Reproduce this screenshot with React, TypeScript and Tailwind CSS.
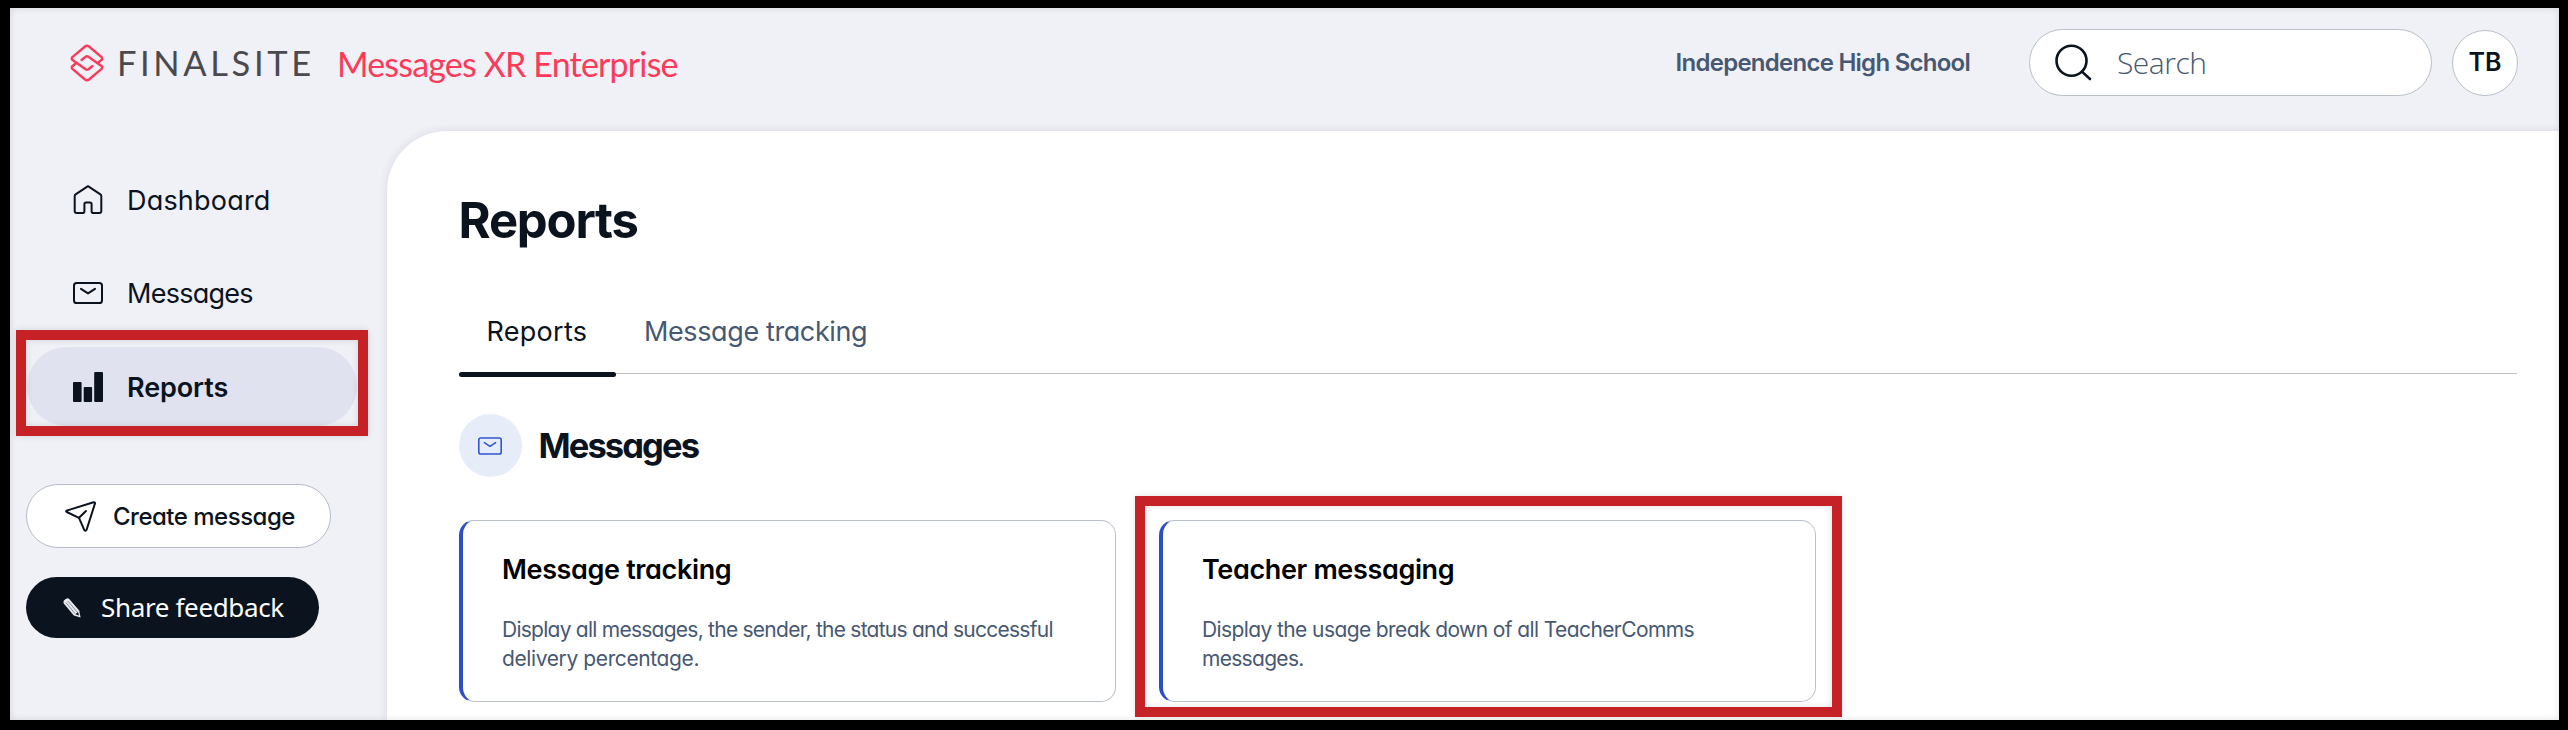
import type { ReactNode } from "react";

const outfit = "font-['Inter','Liberation_Sans',sans-serif] [font-feature-settings:'cv11']";
const noto = "font-['Noto_Sans','Open_Sans',sans-serif]";
const openSans = "font-['Open_Sans','Noto_Sans',sans-serif]";
const lato = "font-['Lato','Liberation_Sans',sans-serif]";

function LogoMark() {
  return (
    <svg className="h-[38px] w-[34px]" viewBox="0 0 34 38" fill="none" stroke="#fb3b59" strokeWidth="2.4" strokeLinejoin="round" strokeLinecap="round">
      <path d="M22.4 22 18.4 25.2Q17 26.2 15.6 25.2L2.6 16Q1 14.6 2.4 13.1L15 2.5Q17 1 19 2.5L31.6 13.1Q33 14.6 31.4 16L28 18.8" />
      <path d="M11.6 16 15.6 12.8Q17 11.8 18.4 12.8L31.4 22Q33 23.4 31.6 24.9L19 35.5Q17 37 15 35.5L2.4 24.9Q1 23.4 2.6 22L6 19.2" />
    </svg>
  );
}

function HomeIcon() {
  return (
    <svg className="h-[30px] w-[30px]" viewBox="0 0 30 30" fill="none" stroke="#0b131e" strokeWidth="2" strokeLinejoin="round">
      <path d="M15 1.2 27.4 9.4Q28.3 10 28.3 11V26Q28.3 28 26.3 28H20.4Q18.6 28 18.6 26.2V19.2Q18.6 17.6 17 17.6H13Q11.4 17.6 11.4 19.2V26.2Q11.4 28 9.6 28H3.7Q1.7 28 1.7 26V11Q1.7 10 2.6 9.4Z" />
    </svg>
  );
}

function MailIcon({ className }: { className: string }) {
  return (
    <svg className={className} viewBox="0 0 30 22" fill="none" stroke="currentColor" strokeWidth="2" strokeLinejoin="round" strokeLinecap="round">
      <rect x="1" y="1" width="28" height="20" rx="2.6" />
      <path d="M8 6.8 15 11.4 22 6.8" />
    </svg>
  );
}

function BarsIcon() {
  return (
    <svg className="h-[30px] w-[30px]" viewBox="0 0 30 30" fill="#0b131e">
      <rect x="0" y="10" width="8.6" height="20" rx="1" />
      <rect x="10.7" y="15" width="8.4" height="15" rx="1" />
      <rect x="21.2" y="0" width="8.8" height="30" rx="1" />
    </svg>
  );
}

function PlaneIcon() {
  return (
    <svg className="h-[31px] w-[31px]" viewBox="0 0 31 31" fill="none" stroke="#0b131e" strokeWidth="2" strokeLinejoin="round" strokeLinecap="round">
      <path d="M1.6 9.6 28.6 1.2Q30.2 1 30 2.4L21.6 28.8Q20.6 30.6 19.2 28.8L14 16.8 1.8 11Q.6 10.2 1.6 9.6Z" />
      <path d="M14 16.8 21 10" />
    </svg>
  );
}

function PencilIcon() {
  return (
    <svg className="h-[20px] w-[18px]" viewBox="0 0 18 20" fill="none">
      <path d="M.8 5.4Q-.2 3.4 1.4 2L3.2.7Q5-.4 6.4 1.2L16.2 12.6 17.6 19.6 10.8 17.6Z" fill="#e8eaee" />
      <path d="M2.8 4.4 12 15.6M4.8 3 14.2 14" stroke="#6b7280" strokeWidth=".8" />
      <path d="M12.4 16.2 15 14 16 17.4Z" fill="#0b131e" />
    </svg>
  );
}

function NavItem({ icon, active, children }: { icon: ReactNode; active?: boolean; children: ReactNode }) {
  return (
    <a className={`flex h-[79px] items-center rounded-[40px] pl-[46px] text-[27px] text-[#0b131e] ${active ? "bg-[#e0e2ef] font-semibold" : ""}`}>
      <span className="mr-[24px] flex w-[30px] justify-center">{icon}</span>
      <span className="pt-[3px]">{children}</span>
    </a>
  );
}

function Card({ title, children }: { title: string; children: ReactNode }) {
  return (
    <article className="h-[182px] w-[657.5px] rounded-[15px] border border-l-4 border-[#bac0cc] border-l-[#2c50c4] pt-[34px] pl-[39.5px]">
      <h3 className="text-[27px] leading-[30px] font-semibold tracking-[-0.36px] text-black">{title}</h3>
      <p className="mt-[30px] text-[21px] leading-[29px] text-[#475872]">{children}</p>
    </article>
  );
}

export default function App() {
  return (
    <div className={`relative h-[730px] w-[2568px] overflow-hidden bg-black pt-2 pr-[9px] pb-[10px] pl-[10px] ${outfit}`}>
      <div className="relative flex h-[712px] flex-col overflow-hidden bg-[#f0f1f7]">
        <header className="flex h-[123px] items-start">
          <div className="flex h-[109px] flex-1 items-center pr-[41px] pl-[60px]">
            <LogoMark />
            <span className={`ml-[13px] w-[205px] text-[34.5px] tracking-[3.6px] whitespace-nowrap text-[#4a4a4e] ${lato}`}>FINALSITE</span>
            <span className={`ml-[15px] pt-px text-[34px] tracking-[-0.82px] text-[#fb3b59] ${lato}`}>Messages XR Enterprise</span>
            <span className="mr-[59px] ml-auto text-[24px] font-semibold tracking-[-0.74px] text-[#475872]">Independence High School</span>
            <div className="flex h-[67px] w-[403px] items-center rounded-full border border-[#b8bfca] bg-white pl-[24px]">
              <svg className="h-[38px] w-[38px]" viewBox="0 0 38 38" fill="none" stroke="#0b131e" strokeWidth="2.6" strokeLinecap="round">
                <circle cx="17.5" cy="16.8" r="15" />
                <path d="M28 27.6 36 35" />
              </svg>
              <span className={`ml-[25px] text-[30px] font-light tracking-[-0.5px] text-[#475872] ${openSans}`}>Search</span>
            </div>
            <div className="ml-[20px] flex h-[66px] w-[66px] items-center justify-center rounded-full border border-[#b8bfca] bg-white text-[25px] font-semibold text-[#0b131e]">TB</div>
          </div>
        </header>
        <div className="flex flex-1">
          <aside className="w-[377px] pt-[29px] pr-[30px] pl-[17px]">
            <nav className="flex flex-col gap-[14.5px]">
              <NavItem icon={<HomeIcon />}><span className="tracking-[0.2px]">Dashboard</span></NavItem>
              <NavItem icon={<MailIcon className="h-[22px] w-[30px]" />}><span className="tracking-[-0.75px]">Messages</span></NavItem>
              <NavItem active icon={<BarsIcon />}><span className="tracking-[-0.1px]">Reports</span></NavItem>
            </nav>
            <button className="mt-[58px] -ml-px flex h-[64px] w-[305px] items-center rounded-full border border-[#b6bdc8] bg-white pl-[38px] text-[24px] font-medium tracking-[-0.5px] text-[#0b131e]">
              <PlaneIcon />
              <span className="ml-[17px] pt-px">Create message</span>
            </button>
            <button className={`mt-[29px] -ml-px flex h-[61px] w-[293px] items-center rounded-full bg-[#0b131e] pl-[37px] text-[26px] tracking-[-0.35px] text-white ${noto}`}>
              <PencilIcon />
              <span className="ml-[20px]">Share feedback</span>
            </button>
          </aside>
          <main className="flex-1 rounded-tl-[60px] bg-white pt-[60px] pr-[42px] pl-[71.5px] shadow-[0_0_10px_rgba(40,45,80,0.12)]">
            <h1 className="text-[49px] leading-[60px] font-bold tracking-[-1.2px] text-[#0b131e]">Reports</h1>
            <div className="mt-[39px] flex h-[84px] border-b border-[#bfbfc2] text-[27px] leading-[84px]">
              <div className="relative w-[157px] pl-[28px] tracking-[0.27px] text-[#0b131e]">
                Reports
                <span className="absolute -bottom-[4px] left-0 h-[5px] w-full rounded-full bg-[#0b131e]" />
              </div>
              <div className="pl-[28.5px] tracking-[-0.39px] text-[#475872]">Message tracking</div>
            </div>
            <div className="mt-[40px] flex h-[63px] items-center">
              <span className="flex h-[63px] w-[63px] items-center justify-center rounded-full bg-[#e6edf8] text-[#2f55d0]">
                <MailIcon className="h-[18px] w-[24px]" />
              </span>
              <h2 className="ml-[17px] text-[34.5px] leading-[60px] font-bold tracking-[-1.9px] text-[#0b131e]">Messages</h2>
            </div>
            <div className="mt-[43px] flex gap-[42.5px]">
              <Card title="Message tracking">
                <span className="tracking-[-0.75px]">Display all messages, the sender, the status and successful</span>
                <br />
                <span className="tracking-[-0.39px]">delivery percentage.</span>
              </Card>
              <Card title="Teacher messaging">
                <span className="tracking-[-0.6px]">Display the usage break down of all TeacherComms</span>
                <br />
                <span className="tracking-[-0.7px]">messages.</span>
              </Card>
            </div>
          </main>
        </div>
        <div className="pointer-events-none absolute inset-0 shadow-[inset_0_0_7px_rgba(0,0,0,0.12)]" />
      </div>
      <div className="absolute top-[330px] left-[16px] h-[106px] w-[352px] border-[10px] border-[#c52127] shadow-[0_0_7px_rgba(0,0,0,0.12),inset_0_0_7px_rgba(0,0,0,0.12)]" />
      <div className="absolute top-[496px] left-[1135px] h-[221px] w-[707px] border-[10px] border-[#c52127] shadow-[0_0_7px_rgba(0,0,0,0.12),inset_0_0_7px_rgba(0,0,0,0.12)]" />
    </div>
  );
}
